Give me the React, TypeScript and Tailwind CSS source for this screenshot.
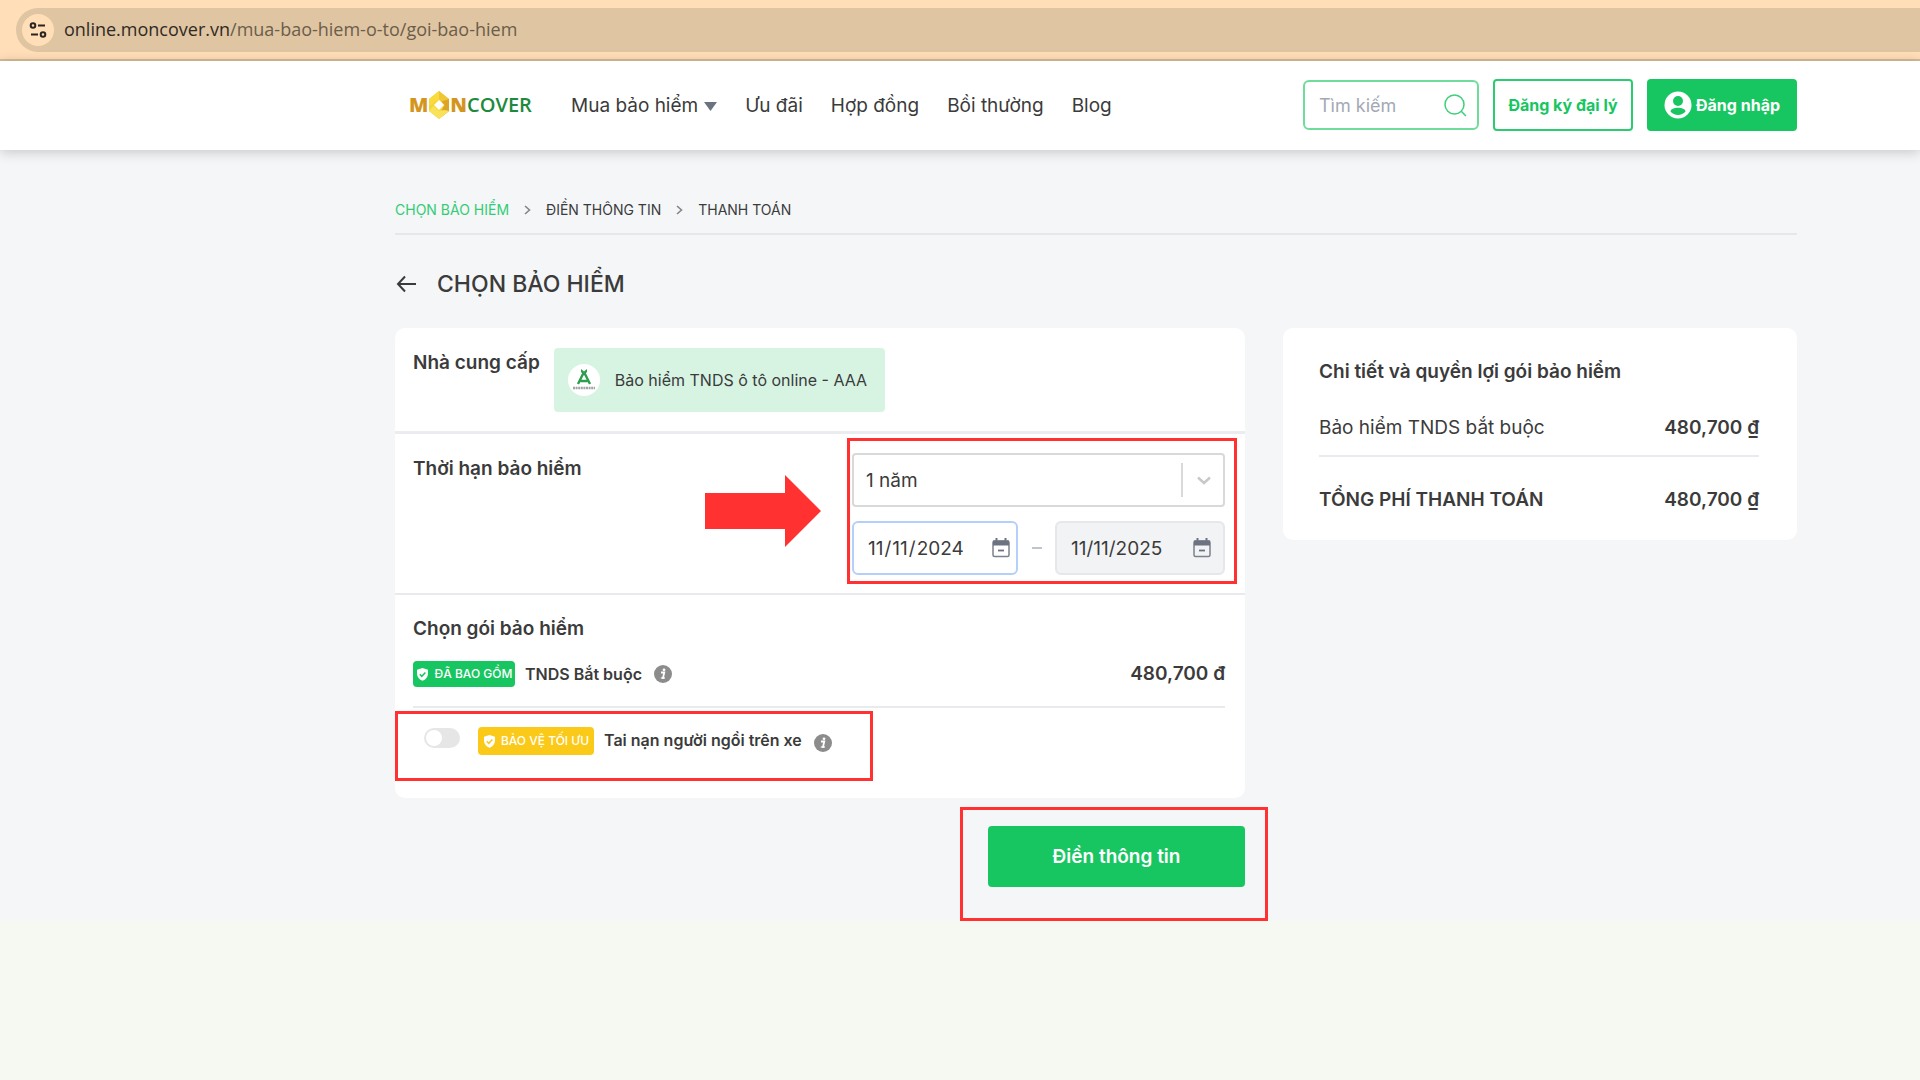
import { useState } from 'react';
import type { ReactNode } from 'react';

const NAV_LINKS = ['Ưu đãi', 'Hợp đồng', 'Bồi thường', 'Blog'];

function SiteSettingsIcon() {
	return (
		<svg width="18" height="18" viewBox="0 0 18 18" fill="none" stroke="#2b2520" strokeWidth="2">
			<circle cx="4" cy="4.5" r="2.3" />
			<path d="M9 4.5h7M2 13.5h7" />
			<circle cx="14" cy="13.5" r="2.3" />
		</svg>
	);
}

function Logo() {
	return (
		<a
			href="#"
			aria-label="Moncover"
			className="flex w-[126px] items-center font-['Open_Sans',sans-serif] text-[20px] leading-6 font-extrabold"
		>
			<span className="text-[#d4951f]">M</span>
			<svg width="22" height="28" viewBox="0 0 22 28">
				<path d="M11 0 1 8v12l10 8 10-8V8Z" fill="#f6d530" />
				<path d="M11 0 1 8v7l10-7V0Z" fill="#f9dc3c" />
				<path d="m11 0 10 8v7L11 8Z" fill="#efc636" />
				<path d="M21 8v12l-7 5.500v-7l2.500-4.500-3-3.500Z" fill="#dba52a" />
				<path d="M1 20l4.500-5L11 20l5.500-1 4.500 1-10 8Z" fill="#f7e25a" />
				<path d="m11 9 5 5-5 5-5-5Z" fill="#fff" />
			</svg>
			<span className="text-[#d4951f]">N</span>
			<span className="font-semibold text-[#1d8a3c]">COVER</span>
		</a>
	);
}

function UserIcon() {
	return (
		<svg width="28" height="28" viewBox="0 0 28 28">
			<circle cx="14" cy="14" r="13.500" fill="#fff" />
			<circle cx="14" cy="10" r="5" fill="#18c661" />
			<path d="M6.500 20.500c0-2.600 4-3.800 7.500-3.800s7.500 1.200 7.500 3.800c-1.800 2.200-4.600 3.400-7.500 3.400s-5.700-1.200-7.500-3.400Z" fill="#18c661" />
		</svg>
	);
}

function CalendarIcon() {
	return (
		<svg width="18" height="20" viewBox="0 0 18 20" fill="none">
			<path d="M4.500 0v4M13.500 0v4" stroke="#6b7280" strokeWidth="2" />
			<rect x="1" y="3" width="16" height="15.500" rx="1.500" stroke="#7b818d" strokeWidth="1.500" />
			<path d="M1 2.500h16v5H1Z" fill="#6b7280" />
			<path d="M6 12.500h6" stroke="#6b7280" strokeWidth="1.800" />
		</svg>
	);
}

function InfoIcon() {
	return (
		<svg width="18" height="18" viewBox="0 0 18 18">
			<circle cx="9" cy="9" r="9" fill="#8c8c8c" />
			<circle cx="10" cy="4.800" r="1.400" fill="#fff" />
			<path d="M7 7.500h3.300L9 12.800h1.500" fill="none" stroke="#fff" strokeWidth="1.800" />
			<path d="M6.800 13h3.800" stroke="#fff" strokeWidth="1.200" />
		</svg>
	);
}

function ShieldIcon({ check }: { check: string }) {
	return (
		<svg width="13" height="13" viewBox="0 0 13 13">
			<path d="M6.500 0 1 1.800v4c0 3.400 2.300 5.800 5.500 7 3.200-1.200 5.500-3.600 5.500-7v-4Z" fill="#fff" />
			<path d="m3.800 6.300 2 2 3.600-3.800" fill="none" stroke={check} strokeWidth="1.500" />
		</svg>
	);
}

function Chevron() {
	return (
		<svg width="7" height="12" viewBox="0 0 7 12" fill="none" stroke="#858585" strokeWidth="1.600">
			<path d="m1 2 4.500 4L1 10" />
		</svg>
	);
}

function Highlight({ className }: { className: string }) {
	return (
		<div
			className={`pointer-events-none absolute border-[3px] border-[#ff3131] ${className}`}
		/>
	);
}

function DateField({ iconClass, children }: { iconClass: string; children: ReactNode }) {
	return (
		<div className="relative">
			{children}
			<span className={`pointer-events-none absolute top-[17px] ${iconClass}`}>
				<CalendarIcon />
			</span>
		</div>
	);
}

export default function App() {
	const [term, setTerm] = useState('1');
	const [startDate, setStartDate] = useState('2024-11-11');
	const [extra, setExtra] = useState(false);

	return (
		<div className="min-h-screen bg-[#f6f9f1] font-[Inter,sans-serif] text-[#3b3b3b]">
			<div className="flex h-[61px] items-center border-b-2 border-[#d6bb96] bg-[#ffdeb8] pl-4">
				<div className="flex h-11 flex-1 items-center gap-[10px] rounded-l-full bg-[#dfc5a2] pl-[6px]">
					<span className="flex size-8 items-center justify-center rounded-full bg-[#ffdeb8]">
						<SiteSettingsIcon />
					</span>
					<span className="font-['Open_Sans',sans-serif] text-[18px] text-[#6b5d4b]">
						<span className="text-[#2f2a24]">online.moncover.vn</span>
						/mua-bao-hiem-o-to/goi-bao-hiem
					</span>
				</div>
			</div>

			<header className="relative flex h-[89px] items-center bg-white pr-[123px] pb-px pl-[409px] shadow-[0_2px_12px_rgba(0,0,0,0.2)]">
				<Logo />
				<nav className="ml-9 flex flex-1 items-center gap-7 pt-[2px] text-[19px]">
					<a href="#" className="flex items-center gap-[6px]">
						Mua bảo hiểm
						<svg width="13" height="9" viewBox="0 0 13 9">
							<path d="M0 0h13L6.500 9Z" fill="#6b7280" />
						</svg>
					</a>
					{NAV_LINKS.map((link) => (
						<a key={link} href="#">
							{link}
						</a>
					))}
				</nav>
				<div className="relative">
					<input
						type="text"
						aria-label="Tìm kiếm"
						placeholder="Tìm kiếm"
						className="h-[50px] w-[176px] rounded-md border-2 border-[#6fdc9b] bg-white pr-10 pl-[14px] text-[18px] placeholder:text-[#a3a9b4]"
					/>
					<svg
						width="23"
						height="23"
						viewBox="0 0 23 23"
						fill="none"
						stroke="#3fcf7c"
						strokeWidth="1.500"
						className="absolute top-[14px] right-3"
					>
						<circle cx="10.500" cy="10.500" r="9.500" />
						<path d="m17 17 5 5" />
					</svg>
				</div>
				<button
					type="button"
					className="ml-[14px] h-[52px] w-[140px] rounded border-2 border-[#2ccb70] text-base font-bold text-[#18c661]"
				>
					Đăng ký đại lý
				</button>
				<button
					type="button"
					className="ml-[14px] flex h-[52px] w-[150px] items-center justify-center gap-1 rounded bg-[#18c661] text-base font-bold text-white"
				>
					<UserIcon />
					Đăng nhập
				</button>
			</header>

			<main className="bg-[#f4f6f8] pt-[47px] pr-[123px] pb-[34px] pl-[395px]">
				<nav className="flex items-center gap-[15px] border-b-2 border-[#e5e7eb] pb-[10px] text-sm leading-[26px]">
					<span className="text-[#33cc75]">CHỌN BẢO HIỂM</span>
					<Chevron />
					<span>ĐIỀN THÔNG TIN</span>
					<Chevron />
					<span>THANH TOÁN</span>
				</nav>

				<h1 className="mt-[33px] mb-7 flex h-8 items-center gap-5 text-[23px] font-medium">
					<button type="button" aria-label="Quay lại">
						<svg width="22" height="18" viewBox="0 0 22 18" fill="none" stroke="#3b3b3b" strokeWidth="2">
							<path d="M10 1.500 3 9l7 7.500M3 9h18" />
						</svg>
					</button>
					CHỌN BẢO HIỂM
				</h1>

				<div className="flex items-start gap-[38px]">
					<div className="min-w-0 flex-1">
						<section className="rounded-[10px] bg-white">
							<div className="flex h-[106px] items-start gap-[14px] border-b-[3px] border-[#ebecf0] pt-5 pr-5 pl-[18px]">
								<h2 className="text-[19px] leading-[30px] font-semibold">Nhà cung cấp</h2>
								<div className="flex h-16 w-[331px] items-center gap-[15px] rounded bg-[#d7f4e3] pl-[14px]">
									<svg width="32" height="32" viewBox="0 0 32 32">
										<circle cx="16" cy="16" r="16" fill="#fff" />
										<path d="m10 20 5-10h2l5 10M12 17h8" fill="none" stroke="#2f9e4f" strokeWidth="2.400" />
										<path d="m13 5 3 2.500L19 5v3l-3 3-3-3Z" fill="#2f9e4f" />
										<path d="M5 24h22" stroke="#9fa5a1" strokeWidth="2.500" strokeDasharray="2 0.600" />
									</svg>
									<span className="text-base">Bảo hiểm TNDS ô tô online - AAA</span>
								</div>
							</div>

							<div className="relative flex h-[161px] justify-between border-b-2 border-[#e8eaee] pt-[19px] pr-5 pl-[18px]">
								<h2 className="text-[19px] leading-8 font-semibold">Thời hạn bảo hiểm</h2>
								<svg
									width="116"
									height="72"
									viewBox="0 0 116 72"
									className="absolute top-[41px] right-[424px]"
								>
									<path d="M0 18h80V0l36 36-36 36V54H0Z" fill="#ff3131" />
								</svg>
								<div className="relative flex w-[373px] flex-col gap-[14px]">
									<div className="relative">
										<select
											aria-label="Thời hạn bảo hiểm"
											value={term}
											onChange={(e) => setTerm(e.target.value)}
											className="block h-[54px] w-full appearance-none rounded border-2 border-[#d9d9d9] bg-white px-3 pt-[2px] text-[19px]"
										>
											<option value="1">1 năm</option>
											<option value="2">2 năm</option>
										</select>
										<span className="pointer-events-none absolute top-[10px] right-[42px] h-[34px] w-[2px] bg-[#d9d9d9]" />
										<svg
											width="14"
											height="9"
											viewBox="0 0 14 9"
											fill="none"
											stroke="#c8c8c8"
											strokeWidth="2.400"
											className="pointer-events-none absolute top-[23px] right-[14px]"
										>
											<path d="m1 1.500 6 5.500 6-5.500" />
										</svg>
									</div>
									<div className="flex items-center justify-between">
										<DateField iconClass="right-2">
											<input
												type="date"
												aria-label="Ngày bắt đầu"
												value={startDate}
												onChange={(e) => setStartDate(e.target.value)}
												className="block h-[54px] w-[166px] rounded-md border-2 border-[#b5cffb] bg-white pt-[2px] pr-2 pl-[13px] text-[19px] [&::-webkit-calendar-picker-indicator]:opacity-0"
											/>
										</DateField>
										<span className="h-[2px] w-[10px] bg-[#c0c4cb]" />
										<DateField iconClass="right-[14px]">
											<input
												type="text"
												aria-label="Ngày kết thúc"
												readOnly
												value="11/11/2025"
												className="block h-[54px] w-[170px] rounded-md border-2 border-[#e5e7eb] bg-[#f2f3f5] pl-[14px] text-[19px]"
											/>
										</DateField>
									</div>
									<Highlight className="-top-[15px] -right-3 -left-[5px] h-[146px]" />
								</div>
							</div>

							<div className="pt-[18px] pr-5 pl-[18px]">
								<h2 className="text-[19px] leading-8 font-semibold">Chọn gói bảo hiểm</h2>
								<div className="mt-[15px] flex items-center border-b-2 border-[#e8eaee] pb-[18px] leading-7">
									<span className="flex h-[26px] w-[102px] items-center justify-center gap-[6px] rounded bg-[#18c661] text-[12px] font-medium text-white">
										<ShieldIcon check="#18c661" />
										ĐÃ BAO GỒM
									</span>
									<span className="ml-[10px] text-[16px] font-semibold">TNDS Bắt buộc</span>
									<span className="ml-3">
										<InfoIcon />
									</span>
									<span className="ml-auto text-[19px] font-semibold">480,700 đ</span>
								</div>
							</div>

							<div className="relative flex h-[90px] items-start pt-[19px] pl-[29px]">
								<input
									id="extra"
									type="checkbox"
									role="switch"
									checked={extra}
									onChange={(e) => setExtra(e.target.checked)}
									className="mt-[1px] h-5 w-9 appearance-none rounded-full bg-[#e6e6e6] before:mt-[2px] before:ml-[2px] before:block before:size-4 before:rounded-full before:bg-white checked:bg-[#18c661] checked:before:ml-[18px]"
								/>
								<span className="ml-[18px] flex h-7 w-[116px] items-center justify-center gap-[5px] rounded bg-[#fbc917] text-[12px] font-medium text-white">
									<ShieldIcon check="#fbc917" />
									BẢO VỆ TỐI ƯU
								</span>
								<label htmlFor="extra" className="ml-[10px] text-[16px] leading-[26px] font-semibold">
									Tai nạn người ngồi trên xe
								</label>
								<span className="ml-3 pt-[7px]">
									<InfoIcon />
								</span>
								<Highlight className="top-[3px] left-0 h-[70px] w-[478px]" />
							</div>
						</section>

						<div className="relative mt-7 ml-auto w-[257px]">
							<button
								type="button"
								className="block h-[61px] w-full rounded bg-[#18c661] pt-[2px] text-[19px] font-semibold text-white"
							>
								Điền thông tin
							</button>
							<Highlight className="-top-[19px] -right-[23px] -left-[28px] h-[114px]" />
						</div>
					</div>

					<aside className="h-[212px] w-[514px] rounded-[10px] bg-white pt-[30px] pr-[38px] pl-9 text-[19px] leading-7">
						<h2 className="font-semibold">Chi tiết và quyền lợi gói bảo hiểm</h2>
						<dl>
							<div className="mt-7 flex justify-between border-b-2 border-[#e8eaee] pb-[13px]">
								<dt>Bảo hiểm TNDS bắt buộc</dt>
								<dd className="font-semibold">480,700 ₫</dd>
							</div>
							<div className="mt-[29px] flex justify-between font-semibold">
								<dt>TỔNG PHÍ THANH TOÁN</dt>
								<dd>480,700 ₫</dd>
							</div>
						</dl>
					</aside>
				</div>
			</main>
		</div>
	);
}
